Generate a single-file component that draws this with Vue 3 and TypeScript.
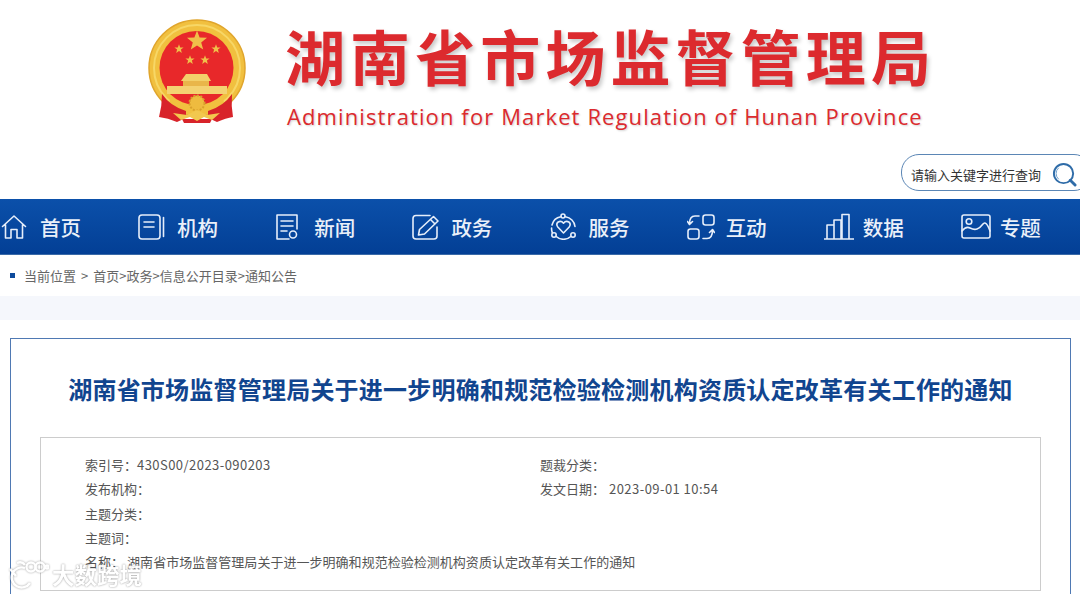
<script setup lang="ts">
interface NavItem {
  label: string
  icon: string
}

interface MetaItem {
  label: string
  value?: string
}

const navItems: NavItem[] = [
  { label: '首页', icon: 'home' },
  { label: '机构', icon: 'org' },
  { label: '新闻', icon: 'news' },
  { label: '政务', icon: 'gov' },
  { label: '服务', icon: 'service' },
  { label: '互动', icon: 'interact' },
  { label: '数据', icon: 'data' },
  { label: '专题', icon: 'topic' }
]

const noticeTitle = '湖南省市场监督管理局关于进一步明确和规范检验检测机构资质认定改革有关工作的通知'

const metaRows: MetaItem[][] = [
  [{ label: '索引号：', value: '430S00/2023-090203' }, { label: '题裁分类：' }],
  [{ label: '发布机构：' }, { label: '发文日期：', value: '2023-09-01 10:54' }],
  [{ label: '主题分类：' }],
  [{ label: '主题词：' }]
]

// five pointed star for the emblem
function star(cx: number, cy: number, r: number): string {
  const pts: string[] = []
  for (let i = 0; i < 10; i++) {
    const rad = i % 2 === 0 ? r : r * 0.42
    const a = (Math.PI / 5) * i - Math.PI / 2
    pts.push(`${(cx + rad * Math.cos(a)).toFixed(1)},${(cy + rad * Math.sin(a)).toFixed(1)}`)
  }
  return pts.join(' ')
}

const stars = [star(197, 41, 10.5), star(179, 49, 4.8), star(216, 49, 4.8), star(190, 60, 4.8), star(205, 60, 4.8)]
</script>

<template>
  <div class="page">
    <header class="header">
      <div class="brand">
        <svg class="emblem" viewBox="141 13 111 118" aria-hidden="true">
          <circle cx="197" cy="68" r="48" fill="#f1c03f" stroke="#e0a52c" stroke-width="1.5" />
          <circle cx="197" cy="68" r="43" fill="none" stroke="#f7d766" stroke-width="2" />
          <circle cx="196.5" cy="68" r="37" fill="#e8282a" />
          <polygon v-for="(s, i) in stars" :key="i" :points="s" fill="#f0c04a" />
          <path d="M186 74 H207 L211 81 H181 Z" fill="#f3d06a" />
          <path d="M183 81 H209 V86 H183 Z" fill="#e9b64a" />
          <path d="M167 86 H227 V94 H167 Z" fill="#f4d272" />
          <path d="M170 98 A37 37 0 0 0 223 98 L225 108 Q197 116 169 108 Z" fill="#f1c03f" />
          <path d="M176 96 H218 L212 100 H182 Z" fill="#e8282a" />
          <circle cx="197" cy="103" r="7.5" fill="#eebb3f" stroke="#d9a02c" stroke-width="2" stroke-dasharray="2 1.5" />
          <path d="M162 94 Q170 106 186 111 L186 117 Q182 120 177 122 Q168 118 159 117 Q162 106 162 94 Z" fill="#d8232a" />
          <path d="M232 94 Q224 106 208 111 L208 117 Q212 120 217 122 Q226 118 233 117 Q231 106 232 94 Z" fill="#d8232a" />
          <path d="M182 119 H212 L210 123 H184 Z" fill="#d8232a" />
          <path d="M173 113 L187 115 L197 110 L207 115 L220 113 L212 120 L204 117 L197 121 L190 117 L181 120 Z" fill="#f2c84e" />
        </svg>
        <div class="brand-text">
          <h1 class="brand-cn">湖南省市场监督管理局</h1>
          <p class="brand-en">Administration for Market Regulation of Hunan Province</p>
        </div>
      </div>
      <div class="search-row">
        <div class="search">
          <span class="search-text">请输入关键字进行查询</span>
          <svg class="search-icon" viewBox="0 0 26 26" fill="none" aria-hidden="true">
            <circle cx="12" cy="12" r="10" stroke="#2f6ca8" stroke-width="2" />
            <path d="M19 19 L24 24" stroke="#2f6ca8" stroke-width="3" stroke-linecap="round" />
            <path d="M7 6 A8 8 0 0 0 7 18" stroke="#6fa0cc" stroke-width="1" />
          </svg>
        </div>
      </div>
    </header>

    <nav class="nav">
      <a v-for="item in navItems" :key="item.label" class="nav-item">
        <span class="nav-icon">
          <svg v-if="item.icon === 'home'" width="26" height="26" viewBox="0 0 26 26" fill="none">
            <path d="M1.5 12.5 L13 2 L24.5 12.5 M4.5 10.5 V24 H10 V15.5 H16 V24 H21.5 V10.5" />
          </svg>
          <svg v-else-if="item.icon === 'org'" width="27" height="26" viewBox="0 0 27 26" fill="none">
            <rect x="1" y="1" width="21" height="24" rx="3" />
            <path d="M6 8 H16 M6 13 H16 M25.5 3.5 V22.5" />
          </svg>
          <svg v-else-if="item.icon === 'news'" width="24" height="26" viewBox="0 0 24 26" fill="none">
            <path d="M14 25 H2 V1 H22 V15" />
            <path d="M6 7 H18 M6 12 H18 M6 17 H12" />
            <circle cx="18" cy="20.5" r="3.5" />
          </svg>
          <svg v-else-if="item.icon === 'gov'" width="27" height="26" viewBox="0 0 27 26" fill="none">
            <path d="M18 1.5 H4 Q1 1.5 1 4.5 V22 Q1 25 4 25 H22 Q25 25 25 22 V13" />
            <path d="M21.5 2.5 L26 7 L12.5 20 L6.5 21 L7.5 15.5 Z M18.5 5.5 L23 10" />
          </svg>
          <svg v-else-if="item.icon === 'service'" width="27" height="27" viewBox="0 0 27 27" fill="none">
            <path d="M13.5 20 L7.8 14 Q5.6 11 8.2 9 Q11.2 7.4 13.5 10.2 Q15.8 7.4 18.8 9 Q21.4 11 19.2 14 Z" />
            <path d="M10.8 3.8 A11 11 0 0 0 2 12 M15.5 3.8 A11 11 0 0 1 25 13.5 M20.8 23.5 A11 11 0 0 1 6.2 23.5 M2.3 19.6 A11 11 0 0 1 1.6 15" />
            <circle cx="13" cy="3" r="2" />
            <circle cx="4" cy="22" r="2.2" />
            <circle cx="23" cy="22" r="2.2" />
          </svg>
          <svg v-else-if="item.icon === 'interact'" width="28" height="26" viewBox="0 0 28 26" fill="none">
            <rect x="16" y="1" width="11" height="10" rx="2.5" />
            <rect x="1" y="15" width="11" height="10" rx="2.5" />
            <path d="M12 2 H8 Q2.5 2 2.5 10 M0.5 7.5 L2.5 10.5 L5.5 7.5" />
            <path d="M16 24.5 H20 Q25.5 24.5 25.5 16 M22.5 18.5 L25.5 15.5 L27.5 18.5" />
          </svg>
          <svg v-else-if="item.icon === 'data'" width="30" height="27" viewBox="0 0 30 27" fill="none">
            <path d="M0 26 H30 M3 26 V12 H10 V26 M10 26 V7 H17 V26 M18 26 V1.5 H25 V26" />
          </svg>
          <svg v-else width="30" height="25" viewBox="0 0 30 25" fill="none">
            <rect x="1" y="1" width="28" height="23" rx="2" />
            <circle cx="8" cy="7.5" r="2.8" />
            <path d="M1 17 Q5 12 9 14 T16 15 T22 10 T29 17" />
          </svg>
        </span>
        <span class="nav-label">{{ item.label }}</span>
      </a>
    </nav>

    <div class="crumbs">
      <i class="crumbs-mark"></i>
      <span>当前位置</span>
      <span class="crumbs-sep">&gt;</span>
      <span>首页&gt;政务&gt;信息公开目录&gt;通知公告</span>
    </div>

    <div class="band"></div>

    <main class="card">
      <h2 class="notice-title">{{ noticeTitle }}</h2>
      <section class="meta">
        <div v-for="(row, i) in metaRows" :key="i" class="meta-row">
          <div v-for="cell in row" :key="cell.label" class="meta-cell">
            <span>{{ cell.label }}</span>
            <span v-if="cell.value" class="meta-value">{{ cell.value }}</span>
          </div>
        </div>
        <div class="meta-row">
          <div class="meta-full">
            <span class="meta-name">名称：</span>
            <span>{{ noticeTitle }}</span>
          </div>
        </div>
      </section>
    </main>

    <div class="watermark">
      <svg class="watermark-logo" width="40" height="30" viewBox="0 0 40 30" fill="none">
        <path d="M1 10 L7 17 M16 9 A10 10 0 1 0 21 24" />
        <path d="M8 4 Q13 2 16 6" />
        <circle cx="22" cy="8" r="4.5" />
        <circle cx="31" cy="8" r="4.5" />
        <circle cx="38" cy="8" r="1.5" />
      </svg>
      <span class="watermark-text">大数跨境</span>
    </div>
  </div>
</template>

<style>
html,
body {
  margin: 0;
  background: #fff;
}
</style>

<style scoped>
.page {
  position: relative;
  width: 1080px;
  height: 594px;
  overflow: hidden;
  background: #fff;
  color: #555;
  font-family: "Noto Sans CJK SC", "Liberation Sans", sans-serif;
}

.header {
  height: 199px;
  box-sizing: border-box;
  padding-top: 13px;
}

.brand {
  display: flex;
  align-items: flex-start;
  height: 141px;
  padding-left: 141px;
}

.emblem {
  width: 111px;
  height: 118px;
  flex: none;
}

.brand-text {
  margin: 4px 0 0 33px;
}

.brand-cn {
  margin: 0;
  font-size: 60px;
  line-height: 76px;
  font-weight: 700;
  letter-spacing: 5.1px;
  white-space: nowrap;
  color: #dc2a2e;
  text-shadow: 2px 3px 4px rgba(0, 0, 0, 0.22);
}

.brand-en {
  margin: 8px 0 0 2px;
  font-family: "Open Sans", "Liberation Sans", sans-serif;
  font-size: 22px;
  line-height: 30px;
  letter-spacing: 1.11px;
  white-space: nowrap;
  color: #dc2a2e;
  text-shadow: 1px 1px 2px rgba(0, 0, 0, 0.18);
}

.search-row {
  display: flex;
  justify-content: flex-end;
  margin-right: -12px;
}

.search {
  display: flex;
  align-items: center;
  width: 191px;
  height: 37px;
  box-sizing: border-box;
  padding: 4px 0 0 9px;
  border: 1.5px solid #5b86b5;
  border-radius: 18px;
  background: #fff;
}

.search-text {
  font-size: 13px;
  color: #333;
  white-space: nowrap;
}

.search-icon {
  width: 25px;
  height: 25px;
  margin: 0 0 0 11px;
  flex: none;
}

.nav {
  display: grid;
  grid-template-columns: repeat(8, 137.14px);
  height: 55px;
  padding-left: 1px;
  background: linear-gradient(#0b50aa, #033f95);
  border-bottom: 1px solid #3a6aa8;
  box-sizing: content-box;
}

.nav-item {
  display: flex;
  align-items: center;
  color: #fff;
}

.nav-icon {
  display: flex;
  align-items: center;
  width: 39px;
  flex: none;
}

.nav-icon svg {
  stroke: #e6eefa;
  stroke-width: 1.6;
  stroke-linejoin: round;
  stroke-linecap: round;
}

.nav-label {
  font-size: 20.5px;
  font-weight: 500;
  color: #eaf0f9;
}

.crumbs {
  display: flex;
  align-items: center;
  gap: 5px;
  height: 41px;
  padding-left: 10px;
  font-size: 13px;
  color: #666;
}

.crumbs-mark {
  width: 5px;
  height: 5px;
  margin-right: 4px;
  background: #0d4a9c;
}

.crumbs-sep {
  margin: 0;
}

.band {
  height: 24px;
  background: #f5f7fc;
}

.card {
  box-sizing: border-box;
  width: 1061px;
  height: 280px;
  margin: 18px 0 0 10px;
  padding: 0 29px;
  border: 1px solid #4f79b3;
  background: #fff;
}

.notice-title {
  margin: 32px 0 0;
  font-size: 24px;
  line-height: 36px;
  font-weight: 700;
  letter-spacing: 0.22px;
  text-align: center;
  white-space: nowrap;
  color: #11458f;
}

.meta {
  box-sizing: border-box;
  width: 1001px;
  height: 154px;
  margin-top: 30px;
  padding: 15px 44px 0;
  border: 1px solid #ccc;
  font-size: 13px;
  color: #555;
}

.meta-row {
  display: flex;
  height: 24.3px;
  line-height: 24.3px;
}

.meta-cell {
  width: 455px;
  flex: none;
}

.meta-value {
  letter-spacing: 0.45px;
}

.meta-cell:last-child .meta-value {
  margin-left: 4px;
}

.meta-cell:first-child .meta-value {
  margin-left: 0;
}

.meta-full {
  white-space: nowrap;
  letter-spacing: 0.03px;
}

.meta-name {
  margin-right: 3px;
}

.watermark {
  position: absolute;
  left: 9px;
  top: 559px;
  display: flex;
  align-items: center;
  gap: 3px;
  opacity: 0.9;
}

.watermark-logo {
  stroke: #fff;
  stroke-width: 2.4;
  filter: drop-shadow(0 0 1px rgba(0, 0, 0, 0.4));
}

.watermark-text {
  font-size: 22.5px;
  line-height: 30px;
  font-weight: 700;
  color: #fff;
  text-shadow: 0 0 2px rgba(0, 0, 0, 0.5);
}
</style>
